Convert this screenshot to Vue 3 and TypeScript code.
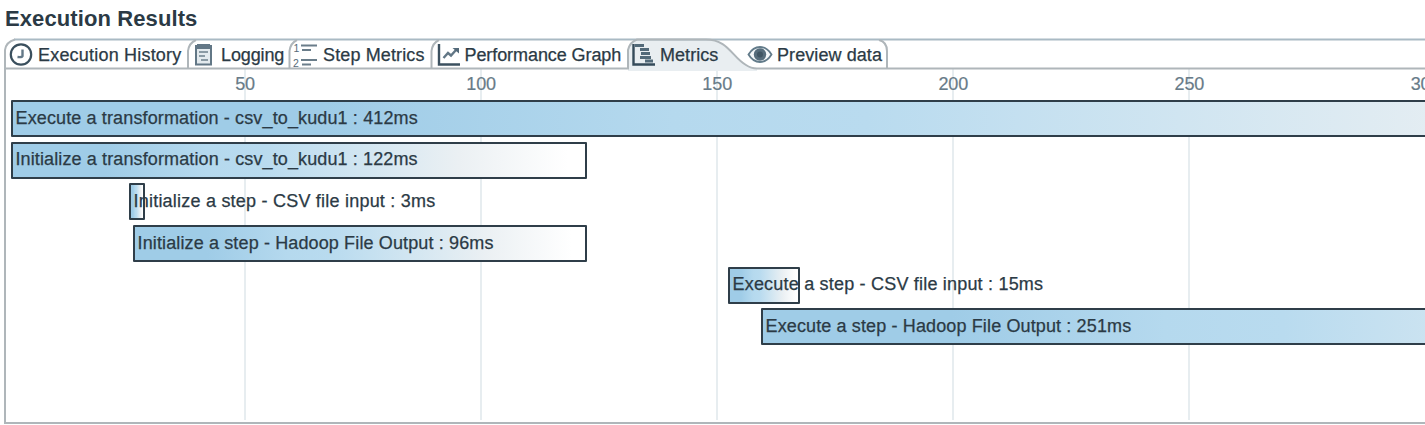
<script setup lang="ts">
interface Tab { id: string; label: string; width: number; spacing: number }
interface Bar { label: string; left: number; width: number; spacing: number }

const tabs: Tab[] = [
  { id: 'history', label: 'Execution History', width: 183, spacing: 0.2 },
  { id: 'logging', label: 'Logging', width: 102, spacing: -0.12 },
  { id: 'steps', label: 'Step Metrics', width: 141.5, spacing: 0.13 },
  { id: 'graph', label: 'Performance Graph', width: 195.5, spacing: -0.08 },
  { id: 'metrics', label: 'Metrics', width: 117, spacing: 0.05 },
  { id: 'preview', label: 'Preview data', width: 143, spacing: 0.08 },
]
const ticks = [50, 100, 150, 200, 250, 300]
const bars: Bar[] = [
  { label: 'Execute a transformation - csv_to_kudu1 : 412ms', left: 5, width: 1946, spacing: 0.13 },
  { label: 'Initialize a transformation - csv_to_kudu1 : 122ms', left: 5, width: 576, spacing: 0.12 },
  { label: 'Initialize a step - CSV file input : 3ms', left: 123, width: 16, spacing: 0.22 },
  { label: 'Initialize a step - Hadoop File Output : 96ms', left: 127, width: 454, spacing: 0.13 },
  { label: 'Execute a step - CSV file input : 15ms', left: 722, width: 72, spacing: 0.2 },
  { label: 'Execute a step - Hadoop File Output : 251ms', left: 755, width: 1186, spacing: 0.13 },
]
</script>

<template>
  <main class="results">
    <h1>Execution Results</h1>
    <nav class="tabs">
      <svg class="outline" width="1425" height="35" viewBox="0 0 1425 35" fill="none">
        <path class="active-fill" d="M628 34V12Q630 5 636 3H706C728 3 732 21 746 28Q751 31 757 31V34Z" />
        <path class="frame-top" d="M14 2.5H1425" />
        <path class="frame" d="M5 35V13Q6 5 15 2.5M188 32V14Q189 6 196 3M289.5 32V14Q290.5 6 297 3M431.5 32V14Q432.5 6 439 3M5 31.5H628V13Q630 5 637 2.5H706C728 2.5 732 20 746 28Q751 31.5 757 31.5H1425M879 3Q887 5 887 14V31" />
      </svg>
      <div v-for="t in tabs" :key="t.id" class="tab" :style="{ width: t.width + 'px', letterSpacing: t.spacing + 'px' }">
        <svg class="icon" width="26" height="26" viewBox="0 0 26 26" fill="none">
          <g v-if="t.id === 'history'"><circle cx="13" cy="12.5" r="10.2" stroke="#3a4f5d" stroke-width="2.2" /><path d="M14.5 7.5V14Q14 15.5 9.5 15" stroke="#637887" stroke-width="2.4" /></g>
          <g v-else-if="t.id === 'logging'"><path d="M5 4H20V22.5H5Z" fill="#e3eaee" stroke="#627786" stroke-width="2" /><path d="M6 3.5H19M4 5.5H21" stroke="#627786" stroke-width="3" /><path d="M8 10H17M8 14H14M10 18H17" stroke="#6e808c" stroke-width="1.6" /></g>
          <g v-else-if="t.id === 'steps'"><path d="M8 3.5H24M9 8H18M8 18H24M9 22.5H18" stroke="#6a7d8a" stroke-width="2.2" /><text x="0.5" y="10" class="digit">1</text><text x="0" y="25" class="digit">2</text></g>
          <g v-else-if="t.id === 'graph'"><path d="M4 2V22.5H25" stroke="#3b505f" stroke-width="2.4" /><path d="M8.5 16L13 11L16 13.5L21 8" stroke="#627786" stroke-width="2.4" /><path d="M17.5 6H24V11.5Z" fill="#536979" /></g>
          <g v-else-if="t.id === 'metrics'"><path d="M3.5 2V22.5H25" stroke="#354b5a" stroke-width="2.4" /><path d="M5 3.5H14M10 7.5H19M11 11.5H20M10 15.5H21M15 19H23" stroke="#536a79" stroke-width="2.8" /></g>
          <g v-else><path d="M1.5 12.5Q6 5 13 5T24.500 12.5Q20 20 13 20T1.500 12.500Z" fill="#f4f8fa" stroke="#627b8a" stroke-width="1.8" /><circle cx="13" cy="12.5" r="6.2" fill="#566d7c" /><circle cx="13" cy="12.5" r="3" fill="#405664" /></g>
        </svg>
        <span class="t">{{ t.label }}</span>
      </div>
    </nav>
    <section class="chart">
      <div class="axis"><div v-for="n in ticks" :key="n" class="tick"><span>{{ n }}</span></div></div>
      <div class="rows">
        <div v-for="b in bars" :key="b.label" class="bar" :style="{ marginLeft: b.left + 'px', width: b.width + 'px', letterSpacing: b.spacing + 'px' }"><span class="t">{{ b.label }}</span></div>
      </div>
    </section>
  </main>
</template>

<style>
html, body { margin: 0; overflow: hidden; background: #fff; }
</style>
<style scoped>
.results { width: 1425px; height: 425px; overflow: hidden; box-sizing: border-box; font: 18px/20px "Liberation Sans", Arial, sans-serif; color: #2b3a45; background: #fff; }
h1 { margin: 0; height: 37px; padding: 7px 0 0 5px; box-sizing: border-box; font-size: 22px; line-height: 24px; letter-spacing: 0.1px; }
.t { -webkit-text-stroke: 0.25px currentColor; }
.tabs { position: relative; height: 32px; padding-left: 5px; display: flex; }
.outline { position: absolute; left: 0; top: 0; }
.frame { stroke: #afb6ba; stroke-width: 2; }
.frame-top { stroke: #a9bac4; stroke-width: 2; }
.active-fill { fill: #e9eef1; }
.tab { position: relative; display: flex; flex: none; align-items: center; gap: 4px; padding: 4px 0 0 3px; box-sizing: border-box; height: 32px; white-space: nowrap; }
.icon { flex: none; }
.digit { font-size: 10.5px; fill: #566b79; }
.chart { height: 355px; margin-left: 4px; border-left: 2px solid #afb6ba; border-bottom: 2px solid #afb6ba; box-sizing: border-box; overflow: hidden; display: grid; }
.axis, .rows { grid-area: 1 / 1; min-width: 0; }
.axis { display: flex; padding-left: 121px; height: 351px; }
.tick { width: 236.1px; flex: none; text-align: center; padding-top: 5px; box-sizing: border-box; color: #687b88; -webkit-text-stroke: 0.2px #687b88; letter-spacing: -0.1px; background: linear-gradient(#e7edf0, #e7edf0) center / 2px 100% no-repeat; }
.tick:last-child { background: none; }
.rows { padding-top: 31px; display: flex; flex-direction: column; gap: 4.7px; z-index: 1; }
.bar { height: 37px; flex: none; box-sizing: border-box; border: 2px solid #2f3e49; border-radius: 1px; background: linear-gradient(90deg, #9fcce7 0%, #9fcce7 16%, #b5d9ee 34%, #b9dbef 44%, #d0e5f1 60%, #ebf0f3 78%, #fff 97%); padding: 5.5px 0 0 2.500px; white-space: nowrap; }
</style>
